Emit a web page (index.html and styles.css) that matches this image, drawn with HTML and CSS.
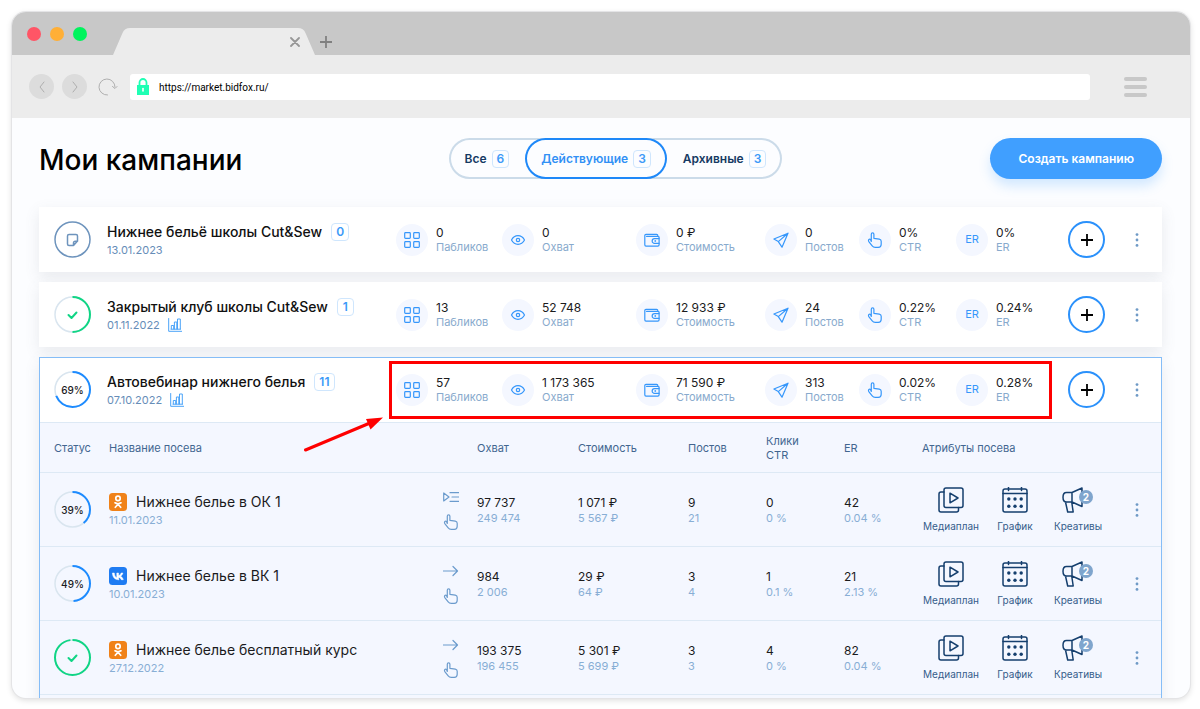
FILE: index.html
```html
<!DOCTYPE html>
<html lang="ru">
<head>
<meta charset="utf-8">
<meta name="viewport" content="width=device-width, initial-scale=1">
<title>Мои кампании</title>
<link rel="stylesheet" href="styles.css">
</head>
<body>
<svg class="sprite" aria-hidden="true">
  <symbol id="i-grid" viewBox="0 0 16 16"><rect x=".7" y=".7" width="5.6" height="5.6" rx=".8"/><rect x="9.7" y=".7" width="5.6" height="5.6" rx=".8"/><rect x=".7" y="9.7" width="5.6" height="5.6" rx=".8"/><rect x="9.7" y="9.7" width="5.6" height="5.6" rx=".8"/></symbol>
  <symbol id="i-eye" viewBox="0 0 16 16"><path d="M1.500 8C3 5.200 5.300 3.700 8 3.700S13 5.200 14.500 8C13 10.800 10.700 12.300 8 12.300S3 10.800 1.500 8z"/><circle cx="8" cy="8" r="1.700"/></symbol>
  <symbol id="i-wallet" viewBox="0 0 16 16"><path d="M13.800 4.300V3.600c0-.7-.5-1.200-1.200-1.200H2C1.300 2.400.8 2.900.8 3.600v9.200c0 .8.500 1.300 1.200 1.300h11.800c.8 0 1.300-.5 1.300-1.300V5.600c0-.7-.5-1.300-1.300-1.300H2.500"/><path d="M15 6.600h-4.500a2.300 2.300 0 0 0 0 4.700H15"/><circle cx="11.300" cy="9" r=".3"/></symbol>
  <symbol id="i-plane" viewBox="0 0 16 16"><path d="M15 1.200.9 7l4.400 2.600L9 15.200 15 1.200zM15 1.200 5.300 9.600"/></symbol>
  <symbol id="i-hand" viewBox="0 0 16 16"><path d="M4.300 9.400V2.300c0-2 2.600-2 2.600 0v4l5.400.9c1.100.2 1.900.9 1.900 2.100v2.900c0 2-1.100 3.100-2.900 3.100H8.200c-1.300 0-2.200-.4-3-1.400L1.800 9.600C.8 7.700 2.400 6.500 3.500 7.500z"/></symbol>
  <symbol id="i-chart" viewBox="0 0 14 14"><path d="M.7.5v12.800H14M3.300 11V7.500h2.400V11M6.400 11V4h2.400v7M9.500 11V1h2.800v10M3 11.200h9.500"/></symbol>
  <symbol id="i-dots" viewBox="0 0 4 14"><circle cx="2" cy="1.600" r="1.400"/><circle cx="2" cy="7" r="1.400"/><circle cx="2" cy="12.400" r="1.400"/></symbol>
  <symbol id="i-arrow" viewBox="0 0 16 16"><path d="M.5 7h14M10 2.500 14.500 7 10 11.500"/></symbol>
  <symbol id="i-playlist" viewBox="0 0 16 16"><path d="M.7 3v8L6 7zM7 2.700h9M9 7h7M7 11.300h9"/></symbol>
  <symbol id="i-media" viewBox="0 0 26 26"><rect x="6" y="1" width="19" height="19.500" rx="2"/><path d="M6 5H3a2 2 0 0 0-2 2v16a2 2 0 0 0 2 2h15.500a2 2 0 0 0 2-2v-2.500M12 6.200v9.600l8-4.800z"/></symbol>
  <symbol id="i-calendar" viewBox="0 0 26 26"><rect x="1" y="2" width="24" height="23" rx="2"/><path d="M1 6.500h24M6.500 0v3.500M19.500 0v3.500"/><g class="pip"><circle cx="6.800" cy="12" r="1.700"/><circle cx="13" cy="12" r="1.700"/><circle cx="19.200" cy="12" r="1.700"/><circle cx="6.800" cy="19.300" r="1.700"/><circle cx="13" cy="19.300" r="1.700"/><circle cx="19.200" cy="19.300" r="1.700"/></g></symbol>
  <symbol id="i-horn" viewBox="0 0 32 26"><path d="M10 5.500H4.500C2.300 5.500 1 7.500 1 10.200S2.300 15 4.500 15H10l10 4.500V1L10 5.500V15M3.500 15l2.200 10h5.500L9.700 15"/></symbol>
  <symbol id="i-ok" viewBox="0 0 18 18"><rect width="18" height="18" rx="3.500" fill="#f08219"/><g fill="none" stroke="#fff" stroke-width="1.700" stroke-linecap="round"><circle cx="9" cy="5.400" r="2.200"/><path d="M6 9.800c1.900 1.200 4.100 1.200 6 0M9 11.200 6.300 14.300M9 11.200l2.700 3.100"/></g></symbol>
  <symbol id="i-vk" viewBox="0 0 18 18"><rect width="18" height="18" rx="3.500" fill="#1f7cf2"/><path fill="#fff" stroke="#fff" stroke-width=".5" stroke-linejoin="round" d="M9.400 12.700C5.800 12.700 3.600 10.200 3.400 6h1.900c.1 3 1.400 4.300 2.500 4.600V6h1.800v2.600c1-.1 2.100-1.300 2.500-2.600h1.800c-.3 1.500-1.500 2.700-2.300 3.200.8.400 2.100 1.400 2.700 3.500h-2c-.4-1.200-1.400-2.200-2.700-2.300v2.300z"/></symbol>
  <symbol id="i-check" viewBox="0 0 37 37"><path d="m14.500 19 3 3 5-5.500"/></symbol>
</svg>

<div class="browser">
  <div class="tabstrip">
    <span class="light light-red"></span><span class="light light-amber"></span><span class="light light-green"></span>
    <div class="tab">
      <svg class="tab-shape" viewBox="0 0 202 27" aria-hidden="true"><path d="M0 27 9.500 5Q11.500 0 17 0H185Q190.500 0 192.500 5L202 27z"/></svg>
      <button class="tab-button" aria-label="Закрыть вкладку"><svg width="10" height="10" viewBox="0 0 10 10"><path d="m1 1 8 8M9 1 1 9"/></svg></button>
    </div>
    <button class="tab-button tab-new" aria-label="Новая вкладка"><svg width="12" height="12" viewBox="0 0 12 12"><path d="M6 0v12M0 6h12"/></svg></button>
  </div>
  <div class="toolbar">
    <button class="nav-button" aria-label="Назад"><svg width="12" height="12" viewBox="0 0 12 12"><path d="M8 1 4 6l4 5"/></svg></button>
    <button class="nav-button" aria-label="Вперёд"><svg width="12" height="12" viewBox="0 0 12 12"><path d="m4 1 4 5-4 5"/></svg></button>
    <button class="nav-button nav-reload" aria-label="Обновить"><svg width="20" height="18" viewBox="0 0 20 18"><path d="M9.500 17A8 8 0 1 1 17 9M14.500 8.500 17 10.500l2-2"/></svg></button>
    <div class="address">
      <svg width="12" height="17" viewBox="0 0 12 17" aria-hidden="true"><path d="M2.500 8V4.500a3.500 3.500 0 0 1 7 0V8" fill="none" stroke="#1fffb4" stroke-width="1.800"/><rect y="7" width="12" height="10" fill="#1fffb4"/><path d="M6 10.500v2.500" stroke="#fff" stroke-width="1.600"/></svg>
      <input class="address-input" type="text" aria-label="Адрес" value="https://market.bidfox.ru/">
    </div>
    <button class="burger" aria-label="Меню"><span></span><span></span><span></span></button>
  </div>

  <main class="page">
    <header class="page-head">
      <h1 class="page-title">Мои кампании</h1>
      <nav class="filter" aria-label="Фильтр кампаний">
        <button class="filter-item">Все <span class="count">6</span></button>
        <button class="filter-item filter-active">Действующие <span class="count">3</span></button>
        <button class="filter-item">Архивные <span class="count">3</span></button>
      </nav>
      <button class="create">Создать кампанию</button>
    </header>

    <section class="card">
      <div class="summary">
        <div class="ring ring-draft">
          <svg viewBox="0 0 37 37" aria-hidden="true"><circle class="bar" cx="18.500" cy="18.500" r="17.500"/><path class="note" d="M15 13.500h7a1.500 1.500 0 0 1 1.500 1.500v5l-4 4.500H15a1.500 1.500 0 0 1-1.500-1.500v-8a1.500 1.500 0 0 1 1.500-1.500zM19.500 24.500V22a1.800 1.800 0 0 1 1.800-1.800h2.200"/></svg>
        </div>
        <div>
          <h2 class="name">Нижнее бельё школы Cut&amp;Sew <span class="count">0</span></h2>
          <p class="date">13.01.2023</p>
        </div>
        <div class="stats">
          <div class="stat"><span class="disc"><svg class="icon"><use href="#i-grid"/></svg></span><p><b>0</b>Пабликов</p></div>
          <div class="stat"><span class="disc"><svg class="icon"><use href="#i-eye"/></svg></span><p><b>0</b>Охват</p></div>
          <div class="stat"><span class="disc"><svg class="icon"><use href="#i-wallet"/></svg></span><p><b>0 ₽</b>Стоимость</p></div>
          <div class="stat"><span class="disc"><svg class="icon"><use href="#i-plane"/></svg></span><p><b>0</b>Постов</p></div>
          <div class="stat"><span class="disc"><svg class="icon"><use href="#i-hand"/></svg></span><p><b>0%</b>CTR</p></div>
          <div class="stat"><span class="disc">ER</span><p><b>0%</b>ER</p></div>
        </div>
        <button class="add" aria-label="Добавить посев"><svg width="12" height="12" viewBox="0 0 12 12"><path d="M6 0v12M0 6h12"/></svg></button>
        <button class="more" aria-label="Ещё"><svg width="4" height="14"><use href="#i-dots"/></svg></button>
      </div>
    </section>

    <section class="card">
      <div class="summary">
        <div class="ring ring-done">
          <svg viewBox="0 0 37 37" aria-hidden="true"><circle class="track" cx="18.500" cy="18.500" r="17.500"/><circle class="bar" cx="18.500" cy="18.500" r="17.500" pathLength="100" stroke-dasharray="50 100"/><use href="#i-check"/></svg>
        </div>
        <div>
          <h2 class="name">Закрытый клуб школы Cut&amp;Sew <span class="count">1</span></h2>
          <p class="date">01.11.2022 <svg class="chart"><use href="#i-chart"/></svg></p>
        </div>
        <div class="stats">
          <div class="stat"><span class="disc"><svg class="icon"><use href="#i-grid"/></svg></span><p><b>13</b>Пабликов</p></div>
          <div class="stat"><span class="disc"><svg class="icon"><use href="#i-eye"/></svg></span><p><b>52 748</b>Охват</p></div>
          <div class="stat"><span class="disc"><svg class="icon"><use href="#i-wallet"/></svg></span><p><b>12 933 ₽</b>Стоимость</p></div>
          <div class="stat"><span class="disc"><svg class="icon"><use href="#i-plane"/></svg></span><p><b>24</b>Постов</p></div>
          <div class="stat"><span class="disc"><svg class="icon"><use href="#i-hand"/></svg></span><p><b>0.22%</b>CTR</p></div>
          <div class="stat"><span class="disc">ER</span><p><b>0.24%</b>ER</p></div>
        </div>
        <button class="add" aria-label="Добавить посев"><svg width="12" height="12" viewBox="0 0 12 12"><path d="M6 0v12M0 6h12"/></svg></button>
        <button class="more" aria-label="Ещё"><svg width="4" height="14"><use href="#i-dots"/></svg></button>
      </div>
    </section>

    <section class="card card-open">
      <div class="summary">
        <div class="ring">
          <svg viewBox="0 0 37 37" aria-hidden="true"><circle class="track" cx="18.500" cy="18.500" r="17.500"/><circle class="bar" cx="18.500" cy="18.500" r="17.500" pathLength="100" stroke-dasharray="69 100"/></svg>
          <span class="percent">69%</span>
        </div>
        <div>
          <h2 class="name">Автовебинар нижнего белья <span class="count">11</span></h2>
          <p class="date">07.10.2022 <svg class="chart"><use href="#i-chart"/></svg></p>
        </div>
        <div class="stats">
          <div class="stat"><span class="disc"><svg class="icon"><use href="#i-grid"/></svg></span><p><b>57</b>Пабликов</p></div>
          <div class="stat"><span class="disc"><svg class="icon"><use href="#i-eye"/></svg></span><p><b>1 173 365</b>Охват</p></div>
          <div class="stat"><span class="disc"><svg class="icon"><use href="#i-wallet"/></svg></span><p><b>71 590 ₽</b>Стоимость</p></div>
          <div class="stat"><span class="disc"><svg class="icon"><use href="#i-plane"/></svg></span><p><b>313</b>Постов</p></div>
          <div class="stat"><span class="disc"><svg class="icon"><use href="#i-hand"/></svg></span><p><b>0.02%</b>CTR</p></div>
          <div class="stat"><span class="disc">ER</span><p><b>0.28%</b>ER</p></div>
          <span class="callout"></span>
          <svg class="pointer" viewBox="0 0 80 36" aria-hidden="true"><path d="M1.500 34 66 7" stroke="#fe0000" stroke-width="3" stroke-linecap="round"/><path d="M79 1.500 62 3l4.500 10.500z" fill="#fe0000"/></svg>
        </div>
        <button class="add" aria-label="Добавить посев"><svg width="12" height="12" viewBox="0 0 12 12"><path d="M6 0v12M0 6h12"/></svg></button>
        <button class="more" aria-label="Ещё"><svg width="4" height="14"><use href="#i-dots"/></svg></button>
      </div>

      <table class="seeds">
        <colgroup><col class="c-status"><col><col class="c-kind"><col class="c-reach"><col class="c-cost"><col class="c-num"><col class="c-num"><col class="c-num"><col class="c-attrs"><col class="c-more"></colgroup>
        <thead>
          <tr><th class="first">Статус</th><th>Название посева</th><th></th><th>Охват</th><th>Стоимость</th><th>Постов</th><th>Клики<br>CTR</th><th>ER</th><th>Атрибуты посева</th><th></th></tr>
        </thead>
        <tbody>
          <tr>
            <td class="first"><div class="ring"><svg viewBox="0 0 37 37" aria-hidden="true"><circle class="track" cx="18.500" cy="18.500" r="17.500"/><circle class="bar" cx="18.500" cy="18.500" r="17.500" pathLength="100" stroke-dasharray="39 100"/></svg><span class="percent">39%</span></div></td>
            <td><div class="seed-name"><svg class="social"><use href="#i-ok"/></svg>Нижнее белье в ОК 1</div><p class="seed-date">11.01.2023</p></td>
            <td><div class="kinds"><svg><use href="#i-playlist"/></svg><svg><use href="#i-hand"/></svg></div></td>
            <td class="pair"><b>97 737</b>249 474</td><td class="pair"><b>1 071 ₽</b>5 567 ₽</td><td class="pair"><b>9</b>21</td><td class="pair"><b>0</b>0 %</td><td class="pair"><b>42</b>0.04 %</td>
            <td><div class="attrs"><button class="attr"><svg><use href="#i-media"/></svg>Медиаплан</button><button class="attr"><svg><use href="#i-calendar"/></svg>График</button><button class="attr"><svg class="horn"><use href="#i-horn"/></svg>Креативы<span class="bubble">2</span></button></div></td>
            <td><button class="more" aria-label="Ещё"><svg width="4" height="14"><use href="#i-dots"/></svg></button></td>
          </tr>
          <tr>
            <td class="first"><div class="ring"><svg viewBox="0 0 37 37" aria-hidden="true"><circle class="track" cx="18.500" cy="18.500" r="17.500"/><circle class="bar" cx="18.500" cy="18.500" r="17.500" pathLength="100" stroke-dasharray="49 100"/></svg><span class="percent">49%</span></div></td>
            <td><div class="seed-name"><svg class="social"><use href="#i-vk"/></svg>Нижнее белье в ВК 1</div><p class="seed-date">10.01.2023</p></td>
            <td><div class="kinds"><svg><use href="#i-arrow"/></svg><svg><use href="#i-hand"/></svg></div></td>
            <td class="pair"><b>984</b>2 006</td><td class="pair"><b>29 ₽</b>64 ₽</td><td class="pair"><b>3</b>4</td><td class="pair"><b>1</b>0.1 %</td><td class="pair"><b>21</b>2.13 %</td>
            <td><div class="attrs"><button class="attr"><svg><use href="#i-media"/></svg>Медиаплан</button><button class="attr"><svg><use href="#i-calendar"/></svg>График</button><button class="attr"><svg class="horn"><use href="#i-horn"/></svg>Креативы<span class="bubble">2</span></button></div></td>
            <td><button class="more" aria-label="Ещё"><svg width="4" height="14"><use href="#i-dots"/></svg></button></td>
          </tr>
          <tr>
            <td class="first"><div class="ring ring-done"><svg viewBox="0 0 37 37" aria-hidden="true"><circle class="track" cx="18.500" cy="18.500" r="17.500"/><circle class="bar" cx="18.500" cy="18.500" r="17.500" pathLength="100" stroke-dasharray="98 100"/><use href="#i-check"/></svg></div></td>
            <td><div class="seed-name"><svg class="social"><use href="#i-ok"/></svg>Нижнее белье бесплатный курс</div><p class="seed-date">27.12.2022</p></td>
            <td><div class="kinds"><svg><use href="#i-arrow"/></svg><svg><use href="#i-hand"/></svg></div></td>
            <td class="pair"><b>193 375</b>196 455</td><td class="pair"><b>5 301 ₽</b>5 699 ₽</td><td class="pair"><b>3</b>3</td><td class="pair"><b>4</b>0 %</td><td class="pair"><b>82</b>0.04 %</td>
            <td><div class="attrs"><button class="attr"><svg><use href="#i-media"/></svg>Медиаплан</button><button class="attr"><svg><use href="#i-calendar"/></svg>График</button><button class="attr"><svg class="horn"><use href="#i-horn"/></svg>Креативы<span class="bubble">2</span></button></div></td>
            <td><button class="more" aria-label="Ещё"><svg width="4" height="14"><use href="#i-dots"/></svg></button></td>
          </tr>
        </tbody>
      </table>
    </section>
  </main>
</div>
</body>
</html>
```
FILE: styles.css
```css
* { box-sizing: border-box; }

body {
  margin: 0;
  height: 100vh;
  padding: 12px 10px 11px 12px;
  display: flex;
  background: #fff;
  color: #1b1b1d;
  font-family: Inter, "Open Sans", sans-serif;
  font-size: 12px;
}

h1, h2, p { margin: 0; font-weight: 400; }

b { display: block; font-weight: 400; }

button {
  border: 0;
  padding: 0;
  background: none;
  color: inherit;
  font: inherit;
  cursor: pointer;
}

svg {
  flex: none;
  fill: none;
  stroke-linecap: round;
  stroke-linejoin: round;
}

.sprite { position: absolute; width: 0; height: 0; }

/* Browser frame */
.browser {
  flex: 1;
  min-width: 0;
  display: flex;
  flex-direction: column;
  overflow: hidden;
  border-radius: 14px;
  background: #fcfdff;
  box-shadow: 0 0 0 1px #e4e4e6, 0 2px 6px #00000026;
}

.tabstrip {
  flex: none;
  display: flex;
  align-items: flex-end;
  height: 43px;
  padding-left: 15px;
  background: #c8c8c8;
}

.light {
  width: 14px;
  height: 14px;
  margin: 0 9px 14px 0;
  border-radius: 50%;
}

.light-red { background: #ff5566; }
.light-amber { background: #ffaf36; }
.light-green { background: #00f45d; }

.tab {
  position: relative;
  display: flex;
  align-items: center;
  justify-content: flex-end;
  width: 202px;
  height: 27px;
  margin-left: 17px;
  padding-right: 15px;
}

.tab-shape {
  position: absolute;
  inset: 0;
  fill: #ececec;
}

.tab-button {
  position: relative;
  display: flex;
  stroke: #979797;
  stroke-width: 1.800;
}

.tab-new { margin: 0 0 7px 5px; stroke: #808080; }

.toolbar {
  flex: none;
  display: flex;
  align-items: center;
  gap: 8px;
  height: 63px;
  padding: 0 43px 0 17px;
  background: #ececec;
}

.nav-button {
  display: flex;
  align-items: center;
  justify-content: center;
  width: 25px;
  height: 25px;
  border-radius: 50%;
  background: #dcdcdc;
  stroke: #aeaeae;
}

.nav-reload { background: none; }

.address {
  flex: 1;
  display: flex;
  align-items: center;
  gap: 10px;
  height: 26px;
  margin: 0 26px 0 2px;
  padding: 0 7px;
  border-radius: 3px;
  background: #fff;
}

.address-input {
  flex: 1;
  min-width: 0;
  border: 0;
  padding: 2px 0 0;
  background: none;
  color: #000;
  font: 10px Roboto, sans-serif;
}

.burger {
  display: flex;
  flex-direction: column;
  gap: 4px;
  width: 23px;
}

.burger span {
  height: 4px;
  border-radius: 2px;
  background: #c8c8c8;
}

/* Page */
.page {
  flex: 1;
  min-height: 0;
  padding: 20px 28px 0 27px;
}

.page-head {
  display: grid;
  grid-template-columns: 411fr auto 381fr;
  align-items: center;
  margin-bottom: 28px;
}

.page-title {
  padding-top: 2px;
  color: #000;
  font-size: 28px;
  font-weight: 500;
  line-height: 38px;
}

.filter {
  display: flex;
  height: 41px;
  border-radius: 21px;
  box-shadow: inset 0 0 0 2px #cbdbe9;
}

.filter-item {
  display: flex;
  align-items: center;
  gap: 5px;
  padding: 0 16px;
  border-radius: 21px;
  color: #153a63;
  font-weight: 600;
}

.filter-active {
  color: #3190f5;
  box-shadow: inset 0 0 0 2px #1e88f8;
}

.count {
  min-width: 17px;
  padding: 0 4px;
  border: 1px solid #cfe6fd;
  border-radius: 4px;
  color: #3c9af8;
  font-size: 12px;
  font-weight: 600;
  line-height: 16px;
  text-align: center;
}

.create {
  justify-self: end;
  height: 41px;
  padding: 0 28px;
  border-radius: 21px;
  background: #409fff;
  box-shadow: 0 7px 12px #409fff38;
  color: #fff;
  font-weight: 600;
}

.card {
  margin-bottom: 10px;
  background: #fff;
  box-shadow: 0 5px 14px #5a64701f;
}

/* The open card runs on below the window edge */
.card-open {
  padding-bottom: 24px;
  background: #f4f7ff;
  outline: 1px solid #85bdf7;
  outline-offset: -1px;
}

.summary {
  display: grid;
  grid-template-columns: 53px minmax(0, 1fr) 672px 37px 57px;
  align-items: center;
  height: 65px;
  padding-left: 15px;
  background: #fff;
}

.ring {
  position: relative;
  display: flex;
  align-items: center;
  justify-content: center;
  width: 37px;
  height: 37px;
}

.ring svg {
  position: absolute;
  inset: 0;
  stroke: #1d8bff;
  stroke-width: 2;
}

.ring .track { stroke: #d9e5ef; stroke-width: 1.500; }

.ring .bar {
  stroke-linecap: butt;
  transform: rotate(-90deg);
  transform-origin: center;
}

.ring-done svg { stroke: #10d585; }

.ring-draft svg { stroke: #6e94bd; stroke-width: 1.500; }

.percent {
  position: relative;
  color: #1b1b1d;
  font-size: 10px;
  font-weight: 500;
}

.name {
  display: flex;
  align-items: center;
  gap: 9px;
  color: #111;
  font-size: 14px;
  font-weight: 500;
  line-height: 20px;
}

.date {
  display: flex;
  align-items: center;
  gap: 8px;
  color: #668db8;
  font-size: 11px;
  line-height: 16px;
}

.chart { width: 14px; height: 14px; stroke: #4aa3f8; }

.stats {
  position: relative;
  display: grid;
  grid-template-columns: 106px 134px 129px 94px 97px 112px;
  align-items: center;
  align-self: stretch;
}

.stat {
  display: flex;
  align-items: center;
  gap: 8px;
  color: #88aacd;
  font-size: 11px;
  line-height: 15px;
  white-space: nowrap;
}

.stat b {
  color: #1b1b1d;
  font-size: 12px;
}

.disc {
  flex: none;
  display: flex;
  align-items: center;
  justify-content: center;
  width: 32px;
  height: 32px;
  border-radius: 50%;
  background: #f4f7ff;
  color: #3697fb;
}

.icon { width: 16px; height: 16px; stroke: #3697fb; stroke-width: 1.200; }

.callout {
  position: absolute;
  inset: 4px 16px 3px -7px;
  border: 3px solid #fe0000;
}

.pointer {
  position: absolute;
  top: 59px;
  left: -92px;
  width: 80px;
  height: 36px;
}

.add {
  display: flex;
  align-items: center;
  justify-content: center;
  width: 37px;
  height: 37px;
  border: 2px solid #2b91fb;
  border-radius: 50%;
  stroke: #000;
  stroke-width: 1.800;
  stroke-linecap: butt;
}

.more {
  display: flex;
  justify-content: flex-end;
  width: 100%;
  padding-right: 23px;
  fill: #6f9ac6;
}

.more svg { fill: inherit; }

/* Table of placements */
.seeds {
  width: 100%;
  table-layout: fixed;
  border-collapse: collapse;
  color: #88aed5;
}

.seeds tr { border-top: 1px solid #dde9f5; }
.seeds tbody tr:last-child { border-bottom: 1px solid #dde9f5; }

.seeds th {
  height: 50px;
  padding: 0;
  color: #426690;
  font-size: 11px;
  font-weight: 400;
  line-height: 14px;
  text-align: left;
}

.seeds td {
  height: 74px;
  padding: 0;
  font-size: 11px;
}

.seeds .first { padding-left: 15px; }

.c-status { width: 70px; }
.c-kind { width: 34px; }
.c-reach { width: 101px; }
.c-cost { width: 110px; }
.c-num { width: 78px; }
.c-attrs { width: 184px; }
.c-more { width: 56px; }

.seed-name {
  display: flex;
  align-items: center;
  gap: 9px;
  color: #1b1b1d;
  font-size: 14px;
  line-height: 20px;
}

.social { width: 18px; height: 18px; }

.seed-date { line-height: 16px; }

.kinds {
  display: grid;
  gap: 8px;
}

.kinds svg { width: 16px; height: 16px; stroke: #6b9bcd; stroke-width: 1.200; }

.pair { line-height: 14px; }
.pair b { color: #1b1b1d; font-size: 12px; line-height: 16px; }

.attrs {
  display: grid;
  grid-template-columns: 58px 70px 56px;
  justify-items: center;
}

.attr {
  position: relative;
  display: flex;
  flex-direction: column;
  align-items: center;
  gap: 6px;
  color: #345d8b;
  font-size: 10px;
  line-height: 14px;
}

.attr svg {
  width: 26px;
  height: 26px;
  stroke: #153f6e;
  stroke-width: 1.500;
}

.attr .horn { width: 32px; }

.pip { fill: #153f6e; stroke: none; }

.bubble {
  position: absolute;
  top: 3px;
  left: calc(50% + 1px);
  width: 14px;
  height: 14px;
  border-radius: 50%;
  background: #7fa5cd;
  color: #fff;
  font-weight: 700;
}
```
